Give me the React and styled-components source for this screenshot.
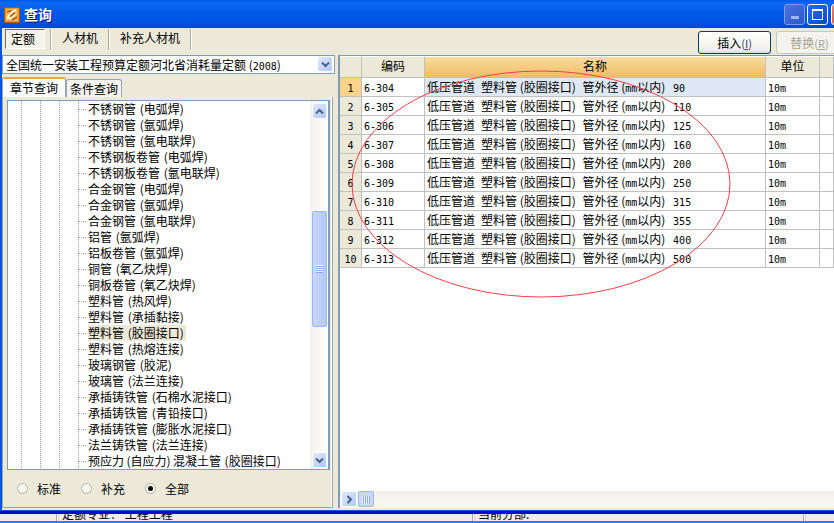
import React from 'react'
import styled, { createGlobalStyle } from 'styled-components'

const cjk = '"Noto Sans CJK SC", "Liberation Sans", sans-serif'

const Global = createGlobalStyle`
html, body {
    margin: 0;
    padding: 0;
    background: #ece9d8;
    overflow: hidden;
}
* { box-sizing: border-box; }
`

const Page = styled.div`
position: relative;
width: 834px;
height: 523px;
display: flex;
flex-direction: column;
overflow: hidden;
font: 12px/16px ${cjk};
color: #000;
`
const Window = styled.div`
height: 510px;
display: flex;
flex-direction: column;
background: #ece9d8;
border-left: 2px solid #0855dd;
`
const TitleBar = styled.div`
height: 28px;
margin-left: -2px;
padding: 4px 0 0 4px;
display: flex;
align-items: flex-start;
background: linear-gradient(180deg, #0058e6 0%, #0a6af5 12%, #0259e6 45%, #0054e3 80%, #0048c8 100%);
`
const IconSlot = styled.div`
flex: none;
height: 16px;
margin-top: 3px;
`
const TitleText = styled.div`
margin: 0 0 0 4px;
font-size: 14px;
line-height: 21px;
font-weight: 700;
color: #fff;
text-shadow: 1px 1px 0 #0f1089;
`
const Controls = styled.div`
margin-left: auto;
margin-right: -18px;
display: flex;
gap: 2px;
`
const Control = styled.div`
flex: none;
width: 21px;
height: 21px;
margin-left: ${p => p.$ml || 0}px;
border: 1px solid ${p => p.$dim ? '#7d9cec' : '#fff'};
border-radius: 3px;
background: ${p => p.$bg};
display: flex;
align-items: center;
justify-content: center;
`
const MinMark = styled.div`
width: 8px;
height: 3px;
margin-top: 5px;
background: #9db8ee;
`
const MaxMark = styled.div`
width: 11px;
height: 11px;
border: 1px solid #fff;
border-top-width: 2px;
`
const Toolbar = styled.div`
height: 27px;
display: flex;
align-items: flex-start;
padding: 1px 0 0 3px;
`
const ModeTab = styled.div`
height: 20px;
padding: ${p => p.$on ? '0 9px 0 5px' : '0'};
line-height: 18px;
font-size: 12px;
background: ${p => p.$on ? 'repeating-conic-gradient(#fff 0 25%, #ece9d8 0 50%) 0 0 / 2px 2px' : 'transparent'};
border: ${p => p.$on ? '1px solid' : '0'};
border-color: #716f64 #fff #fff #716f64;
margin-right: ${p => p.$gap}px;
`
const ToolSep = styled.div`
width: 2px;
height: 21px;
background: #aca899;
border-right: 1px solid #fff;
margin-right: ${p => p.$gap}px;
`
const ActionBox = styled.div`
margin-left: auto;
display: flex;
gap: 5px;
padding-top: 2px;
margin-right: -9px;
`
const Action = styled.div`
width: ${p => p.$w}px;
height: 23px;
border: 1px solid ${p => p.$off ? '#c9c7ba' : '#003c74'};
border-radius: 3px;
background: ${p => p.$off ? '#f4f3ee' : 'linear-gradient(180deg, #fff, #f1f0e7 85%, #dcd8c8)'};
color: ${p => p.$off ? '#a5a294' : '#000'};
text-align: center;
line-height: 21px;
`
const Hotkey = styled.span`
font-size: 11px;
color: ${p => p.$off ? '#a5a294' : '#1c3f78'};
`
const HotLetter = styled.span`
text-decoration: underline;
`
const Main = styled.div`
flex: 1;
min-height: 0;
display: flex;
`
const Left = styled.div`
width: 331px;
flex: none;
display: flex;
flex-direction: column;
`
const Combo = styled.div`
height: 19px;
margin-right: -2px;
background: #fff;
border: 1px solid #7f9db9;
padding-left: 3px;
line-height: 17px;
display: flex;
justify-content: space-between;
`
const ArrowBtn = styled.div`
flex: none;
width: ${p => p.$w || 16}px;
height: 16px;
margin: ${p => p.$m || '0'};
border: 1px solid #fff;
border-radius: 2px;
background: linear-gradient(135deg, #e1eafe, #aec8f7);
display: flex;
align-items: center;
justify-content: center;
`
const QueryTabs = styled.div`
height: 20px;
margin-top: 3px;
display: flex;
align-items: flex-end;
`
const QueryTab = styled.div`
height: ${p => p.$on ? 20 : 18}px;
padding: 0 ${p => p.$on ? 7 : 3}px;
line-height: ${p => p.$on ? 18 : 17}px;
background: ${p => p.$on ? '#fff' : '#f5f4ee'};
border: 1px solid #91a7b4;
border-bottom: 0;
border-top: ${p => p.$on ? '2px solid #f0a830' : '1px solid #91a7b4'};
border-radius: 3px 3px 0 0;
`
const TabPage = styled.div`
flex: 1;
min-height: 0;
margin-bottom: 2px;
display: flex;
flex-direction: column;
background: #ece9d8;
border: 1px solid #91a7b4;
border-top: 0;
box-shadow: inset -1px 0 0 #fff;
padding: 3px 2px 0 4px;
`
const TreeBox = styled.div`
height: 370px;
flex: none;
display: flex;
background: #fff;
border: 1px solid #7f9db9;
border-right-width: 2px;
overflow: hidden;
`
const Tree = styled.div`
flex: 1;
overflow: hidden;
background-image:
    repeating-linear-gradient(180deg, #a0a0a0 0 1px, transparent 1px 2px),
    repeating-linear-gradient(180deg, #a0a0a0 0 1px, transparent 1px 2px),
    repeating-linear-gradient(180deg, #a0a0a0 0 1px, transparent 1px 2px),
    repeating-linear-gradient(180deg, #a0a0a0 0 1px, transparent 1px 2px);
background-size: 1px 100%;
background-repeat: no-repeat;
background-position: 13px 0, 32px 0, 51px 0, 70px 0;
`
const TreeRow = styled.div`
height: 16px;
margin-left: 71px;
padding-left: 9px;
position: relative;
white-space: nowrap;
word-spacing: 1px;
&::before {
    content: '';
    position: absolute;
    left: 0;
    top: 8px;
    width: 8px;
    height: 1px;
    background: repeating-linear-gradient(90deg, #a0a0a0 0 1px, transparent 1px 2px);
}
`
const TreeLabel = styled.span`
display: inline-block;
padding-right: 2px;
background: ${p => p.$on ? '#ece9d8' : 'transparent'};
`
const VScroll = styled.div`
flex: none;
width: 18px;
display: flex;
flex-direction: column;
padding-top: 2px;
background: linear-gradient(90deg, #f3f1ec, #fefefb);
`
const ScrollSpace = styled.div`
height: ${p => p.$h}px;
flex: none;
`
const VThumb = styled.div`
height: 116px;
margin: 0 1px 0 2px;
flex: none;
border: 1px solid #9db8ee;
border-radius: 2px;
background: linear-gradient(90deg, #c8d7fa, #b4c9f7);
display: flex;
align-items: center;
justify-content: center;
`
const Grip = styled.div`
width: 7px;
height: 8px;
background: repeating-linear-gradient(180deg, #eef3fe 0 1px, #8fa9e6 1px 2px);
`
const RadioBar = styled.div`
flex: 1;
display: flex;
align-items: center;
padding: 0 0 0 10px;
gap: 9px;
`
const Radio = styled.div`
width: 11px;
height: 11px;
border: 1px solid #b5b2a5;
border-radius: 50%;
background: #f7f6f0;
display: flex;
align-items: center;
justify-content: center;
margin-left: ${p => p.$gap || 0}px;
`
const Dot = styled.div`
width: 5px;
height: 5px;
border-radius: 50%;
background: #000;
`
const Right = styled.div`
flex: 1;
min-width: 0;
margin-left: 5px;
display: flex;
flex-direction: column;
background: #fff;
border: 1px solid #7f9db9;
border-right: 0;
border-bottom: 0;
border-left-width: 2px;
margin-bottom: 2px;
`
const Table = styled.div`
flex: 1;
min-height: 0;
padding-top: 1px;
`
const Row = styled.div`
display: flex;
height: ${p => p.$h || 19}px;
`
const Cell = styled.div`
flex: none;
width: ${p => p.$w}px;
padding-left: ${p => p.$pl ?? 2}px;
white-space: pre;
line-height: 18px;
text-align: ${p => p.$center ? 'center' : 'left'};
border-right: 1px solid #c0c0c0;
border-bottom: 1px solid #c0c0c0;
background: ${p => p.$bg || 'transparent'};
`
const Latin = styled.span`
font-family: "DejaVu Sans Mono", "Liberation Mono", monospace;
font-size: 10px;
`
const Seg = styled.span`
margin-right: ${p => p.$after || 0}px;
`
const HScroll = styled.div`
height: 17px;
flex: none;
display: flex;
gap: 1px;
padding-left: 1px;
background: linear-gradient(180deg, #f1efe7, #fbfaf6);
`
const HThumb = styled.div`
width: 16px;
height: 16px;
border: 1px solid #9db8ee;
border-radius: 2px;
background: #c8d7fa;
display: flex;
align-items: center;
justify-content: center;
`
const VGrip = styled.div`
width: 8px;
height: 7px;
background: repeating-linear-gradient(90deg, #eef3fe 0 1px, #8fa9e6 1px 2px);
`
const EdgeDark = styled.div`
height: 4px;
flex: none;
background: linear-gradient(180deg, #0a5ae0 0, #0a5ae0 25%, #0000c4 25%, #0014c8 100%);
`
const StatusStrip = styled.div`
height: 7px;
flex: none;
overflow: hidden;
display: flex;
background: #f1eee0;
line-height: 0;
padding-left: 56px;
`
const StatusCell = styled.div`
width: ${p => p.$w}px;
flex: none;
padding-left: 5px;
border-left: 1px solid #aca899;
box-shadow: inset 1px 0 0 #fff, inset 2px 0 0 #d8d4c4;
white-space: pre;
`
const EdgeLow = styled.div`
flex: 1;
background: #2f7fe6;
`
const Ellipse = styled.svg`
position: absolute;
left: 0;
top: 0;
pointer-events: none;
`

const Chevron = ({ up, left }) => (
    <svg width="9" height="7" viewBox="0 0 9 7" style={left ? { transform: 'rotate(-90deg)' } : undefined}>
        <path d={up ? 'M1 5.5 L4.5 2 L8 5.5' : 'M1 1.5 L4.5 5 L8 1.5'} fill="none" stroke="#4d6185" strokeWidth="2" />
    </svg>
)

const AppIcon = () => (
    <svg width="16" height="16" viewBox="0 0 16 16" style={{ display: 'block' }}>
        <rect x="0.5" y="0.5" width="15" height="15" fill="#e8951f" stroke="#a85a12" />
        <rect x="2" y="2" width="12" height="12" fill="#f4b04a" />
        <path d="M3 12 C5 10 4 8 7 7 C9 6 9 4 12 3" stroke="#fff2d6" strokeWidth="2.6" fill="none" />
        <path d="M5 12 C8 12 9 10 12 7" stroke="#fff2d6" strokeWidth="1.6" fill="none" />
        <path d="M3 5 L7 3.5 M6 9.5 L11 5.5 M8 13 L13 10" stroke="#9c3a14" strokeWidth="1.1" fill="none" />
    </svg>
)

const treeItems = [
    '不锈钢管 (电弧焊)', '不锈钢管 (氩弧焊)', '不锈钢管 (氩电联焊)', '不锈钢板卷管 (电弧焊)',
    '不锈钢板卷管 (氩电联焊)', '合金钢管 (电弧焊)', '合金钢管 (氩弧焊)', '合金钢管 (氩电联焊)',
    '铝管 (氩弧焊)', '铝板卷管 (氩弧焊)', '铜管 (氧乙炔焊)', '铜板卷管 (氧乙炔焊)',
    '塑料管 (热风焊)', '塑料管 (承插黏接)', '塑料管 (胶圈接口)', '塑料管 (热熔连接)',
    '玻璃钢管 (胶泥)', '玻璃管 (法兰连接)', '承插铸铁管 (石棉水泥接口)', '承插铸铁管 (青铅接口)',
    '承插铸铁管 (膨胀水泥接口)', '法兰铸铁管 (法兰连接)', '预应力\u2009(自应力)\u2009混凝土管 (胶圈接口)',
]

const sizes = [90, 110, 125, 160, 200, 250, 315, 355, 400, 500]

// spacing is set per segment so the columns of text fall where the bitmap font put them
const PipeName = ({ size }) => (
    <>
        <Seg $after={6}>低压管道</Seg>
        <Seg>塑料管 (胶圈接口)</Seg>
        <Seg $after={4}> </Seg>
        <Seg>管外径 (<Latin>mm</Latin>以内)</Seg>
        <Seg $after={5}> </Seg>
        <Latin>{size}</Latin>
    </>
)

export default function App() {
    return (
        <Page>
            <Global />
            <Window>
                <TitleBar>
                    <IconSlot><AppIcon /></IconSlot>
                    <TitleText>查询</TitleText>
                    <Controls>
                        <Control $dim $bg="linear-gradient(135deg, #4f74e0, #2a55cc)"><MinMark /></Control>
                        <Control $bg="linear-gradient(135deg, #2a6af0, #1048c8)"><MaxMark /></Control>
                        <Control $ml={1} $bg="linear-gradient(135deg, #e88a6a, #c83a18)" />
                    </Controls>
                </TitleBar>
                <Toolbar>
                    <ModeTab $on $gap={5}>定额</ModeTab>
                    <ToolSep $gap={10} />
                    <ModeTab $gap={10}>人材机</ModeTab>
                    <ToolSep $gap={10} />
                    <ModeTab $gap={10}>补充人材机</ModeTab>
                    <ToolSep $gap={0} />
                    <ActionBox>
                        <Action $w={73}>插入<Hotkey>(<HotLetter>I</HotLetter>)</Hotkey></Action>
                        <Action $w={67} $off>替换<Hotkey $off>(<HotLetter>R</HotLetter>)</Hotkey></Action>
                    </ActionBox>
                </Toolbar>
                <Main>
                    <Left>
                        <Combo>
                            <span>全国统一安装工程预算定额河北省消耗量定额 (<Latin>2008</Latin>)</span>
                            <ArrowBtn $m="0 1px 0 0"><Chevron /></ArrowBtn>
                        </Combo>
                        <QueryTabs>
                            <QueryTab $on>章节查询</QueryTab>
                            <QueryTab>条件查询</QueryTab>
                        </QueryTabs>
                        <TabPage>
                            <TreeBox>
                                <Tree>
                                    {treeItems.map((item) => (
                                        <TreeRow key={item}>
                                            <TreeLabel $on={item === '塑料管 (胶圈接口)'}>{item}</TreeLabel>
                                        </TreeRow>
                                    ))}
                                </Tree>
                                <VScroll>
                                    <ArrowBtn $w={15} $m="0 1px 0 2px"><Chevron up /></ArrowBtn>
                                    <ScrollSpace $h={92} />
                                    <VThumb><Grip /></VThumb>
                                    <ScrollSpace $h={125} />
                                    <ArrowBtn $w={15} $m="0 1px 0 2px"><Chevron /></ArrowBtn>
                                </VScroll>
                            </TreeBox>
                            <RadioBar>
                                <Radio />标准
                                <Radio $gap={11} />补充
                                <Radio $gap={11}><Dot /></Radio>全部
                            </RadioBar>
                        </TabPage>
                    </Left>
                    <Right>
                        <Table>
                            <Row $h={21}>
                                <Cell $w={22} $bg="#ece9d8" />
                                <Cell $w={63} $bg="#ece9d8" $center $pl={0}>编码</Cell>
                                <Cell $w={341} $bg="linear-gradient(180deg, #f9dca0, #f1bd63)" $center $pl={0}>名称</Cell>
                                <Cell $w={54} $bg="#ece9d8" $center $pl={0}>单位</Cell>
                                <Cell $w={14} $bg="#ece9d8" />
                            </Row>
                            {sizes.map((size, i) => (
                                <Row key={size}>
                                    <Cell $w={22} $center $pl={0} $bg={i === 0 ? '#fbd38a' : '#ece9d8'}><Latin>{i + 1}</Latin></Cell>
                                    <Cell $w={63}><Latin>{`6-${304 + i}`}</Latin></Cell>
                                    <Cell $w={341} $bg={i === 0 ? '#dfe8f5' : undefined}><PipeName size={size} /></Cell>
                                    <Cell $w={54}><Latin>10m</Latin></Cell>
                                    <Cell $w={14} />
                                </Row>
                            ))}
                        </Table>
                        <HScroll>
                            <ArrowBtn><Chevron left /></ArrowBtn>
                            <HThumb><VGrip /></HThumb>
                        </HScroll>
                    </Right>
                </Main>
            </Window>
            <EdgeDark />
            <StatusStrip>
                <StatusCell $w={416}>定额专业： 工程工程</StatusCell>
                <StatusCell $w={331}>当前分部:</StatusCell>
                <StatusCell $w={3} />
            </StatusStrip>
            <EdgeLow />
            <Ellipse width="834" height="523">
                <ellipse cx="541" cy="184" rx="189" ry="113" fill="none" stroke="#f4404a" strokeWidth="1" />
            </Ellipse>
        </Page>
    )
}
